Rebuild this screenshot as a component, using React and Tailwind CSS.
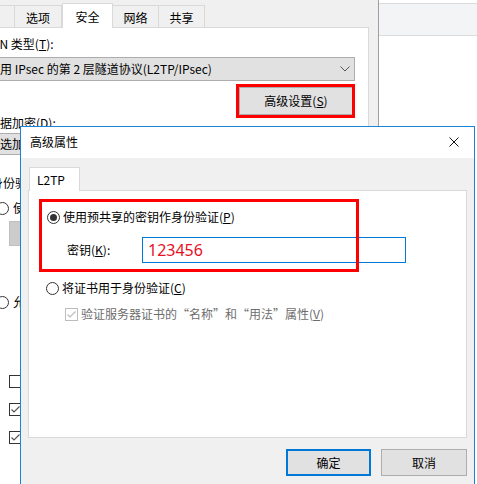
import React from 'react';

function Radio({ checked }) {
  return (
    <span className="flex h-[13px] w-[13px] shrink-0 items-center justify-center rounded-full border border-[#333333] bg-white">
      {checked && <span className="h-[7px] w-[7px] rounded-full bg-[#333333]" />}
    </span>
  );
}

function Check({ checked, disabled }) {
  return (
    <span
      className={`flex h-[13px] w-[13px] shrink-0 items-center justify-center border bg-white ${
        disabled ? 'border-[#bcbcbc]' : 'border-[#333333]'
      }`}
    >
      {checked && (
        <svg viewBox="0 0 11 11" className="h-[11px] w-[11px]">
          <path d="M1.5 5.5 L4 8 L9.5 2.5" fill="none" stroke={disabled ? '#bcbcbc' : '#555555'} strokeWidth="1.2" />
        </svg>
      )}
    </span>
  );
}

function Tab({ label, selected, width }) {
  if (selected) {
    return (
      <div
        className="relative z-10 -mb-px flex h-[25px] items-start justify-center border-x border-t border-[#d9d9d9] bg-white pt-[4px]"
        style={{ width }}
      >
        {label}
      </div>
    );
  }
  return (
    <div
      className="flex h-[22px] items-start justify-center border-r border-t border-[#d9d9d9] bg-[#f0f0f0] pt-[3px]"
      style={{ width }}
    >
      {label}
    </div>
  );
}

function BackgroundWindow() {
  return (
    <div className="flex w-[379px] shrink-0 flex-col border-r border-[#a0a0a0] bg-[#f0f0f0]">
      {/* tabs */}
      <div className="flex h-[27px] items-end">
        <div className="h-[22px] w-[15px] border-r border-t border-[#d9d9d9]" />
        <Tab label="选项" width={47} />
        <Tab label="安全" width={51} selected />
        <Tab label="网络" width={46} />
        <Tab label="共享" width={46} />
      </div>

      {/* tab page, partly under the dialog */}
      <div className="flex w-[369px] flex-1 flex-col border-r border-t border-[#d9d9d9] bg-white leading-[16px]">
        <div className="ml-[-15px] mt-[8px] whitespace-nowrap">
          VPN 类型(<span className="underline">T</span>):
        </div>
        <div className="ml-[-20px] mt-[5px] flex h-[24px] w-[375px] items-center justify-between border border-[#adadad] bg-[#e1e1e1] pl-[7px] pr-[4px]">
          <span className="whitespace-nowrap">使用 IPsec 的第 2 层隧道协议(L2TP/IPsec)</span>
          <svg viewBox="0 0 10 6" className="h-[6px] w-[10px]">
            <path d="M0.5 0.5 L5 5 L9.5 0.5" fill="none" stroke="#555555" strokeWidth="1" />
          </svg>
        </div>
        <div className="mt-[6px] flex justify-end pr-[15px]">
          <div className="relative flex h-[28px] w-[114px] items-center justify-center border border-[#adadad] bg-[#e1e1e1]">
            高级设置(<span className="underline">S</span>)
            <span className="absolute -bottom-[4px] -left-[4px] -right-[3px] -top-[4px] border-[3px] border-[#ff0000]" />
          </div>
        </div>
        <div className="ml-[-12px] whitespace-nowrap">
          数据加密(<span className="underline">D</span>):
        </div>
        <div className="ml-[-20px] mt-[2px] flex h-[22px] w-[40px] items-center overflow-hidden border-y border-l border-[#adadad] bg-[#e1e1e1]">
          <span className="ml-[7px] whitespace-nowrap">可选加</span>
        </div>
        <div className="ml-[-9px] mt-[20px] w-[29px] overflow-hidden whitespace-nowrap">身份验</div>
        <div className="ml-[-4px] mt-[9px] flex w-[24px] items-center gap-[4px] overflow-hidden whitespace-nowrap">
          <Radio />
          使
        </div>
        <div className="ml-[9px] mt-[5px] h-[25px] w-[11px] border-y border-l border-[#bfbfbf] bg-[#cccccc]" />
        <div className="ml-[-4px] mt-[48px] flex w-[24px] items-center gap-[4px] overflow-hidden whitespace-nowrap">
          <Radio />
          允
        </div>
        <div className="ml-[9px] mt-[65px] flex flex-col gap-[15px]">
          <Check />
          <Check checked />
          <Check checked />
        </div>
      </div>
    </div>
  );
}

function AdvancedDialog() {
  return (
    <div className="absolute left-[20px] top-[126px] flex h-[400px] w-[455px] flex-col border border-[#1883d7] bg-[#f0f0f0] leading-[16px]">
      {/* title bar */}
      <div className="flex h-[31px] items-center justify-between bg-white pb-[2px] pl-[9px] pr-[15px]">
        <span>高级属性</span>
        <svg viewBox="0 0 10 10" className="h-[10px] w-[10px]">
          <path d="M0.5 0.5 L9.5 9.5 M9.5 0.5 L0.5 9.5" fill="none" stroke="#111111" strokeWidth="1" />
        </svg>
      </div>

      {/* tab */}
      <div className="ml-[8px] mt-[9px] flex">
        <div className="relative z-10 -mb-px flex h-[24px] w-[51px] items-center border-x border-t border-[#d9d9d9] bg-white pl-[7px]">
          L2TP
        </div>
      </div>

      {/* tab page */}
      <div className="relative mx-[7px] flex h-[248px] flex-col border border-[#d9d9d9] bg-white">
        <div className="ml-[18px] mt-[18px] flex items-center gap-[3px]">
          <Radio checked />
          <span>
            使用预共享的密钥作身份验证(<span className="underline">P</span>)
          </span>
        </div>
        <div className="ml-[38px] mt-[12px] flex items-center">
          <span className="w-[75px]">
            密钥(<span className="underline">K</span>):
          </span>
          <div className="flex h-[26px] w-[264px] items-center border border-[#0078d7] pl-[5px] font-['Noto_Sans',sans-serif] text-[16px] text-[#e81123]">
            123456
          </div>
        </div>
        <div className="ml-[17px] mt-[17px] flex items-center gap-[3px]">
          <Radio />
          <span>
            将证书用于身份验证(<span className="underline">C</span>)
          </span>
        </div>
        <div className="ml-[36px] mt-[10px] flex items-center gap-[3px] text-[#6d6d6d]">
          <Check checked disabled />
          <span>
            验证服务器证书的“名称”和“用法”属性(<span className="underline">V</span>)
          </span>
        </div>

        {/* highlight */}
        <span className="absolute left-[10px] top-[8px] h-[73px] w-[320px] border-[3px] border-[#ff0000]" />
      </div>

      {/* buttons */}
      <div className="mr-[7px] mt-[11px] flex justify-end gap-[10px]">
        <button className="flex h-[27px] w-[85px] items-center justify-center border-2 border-[#0078d7] bg-[#e1e1e1]">
          确定
        </button>
        <button className="flex h-[27px] w-[86px] items-center justify-center border border-[#adadad] bg-[#e1e1e1]">
          取消
        </button>
      </div>
    </div>
  );
}

export default function App() {
  return (
    <div className="relative flex h-[484px] w-[477px] overflow-hidden bg-white font-['Noto_Sans_CJK_SC',sans-serif] text-[12px] text-black">
      <BackgroundWindow />
      <div className="flex-1 bg-white pt-[3px]">
        <div className="h-[33px] border-y border-[#dcdcdc] bg-[#f3f4f6]" />
      </div>
      <AdvancedDialog />
    </div>
  );
}
